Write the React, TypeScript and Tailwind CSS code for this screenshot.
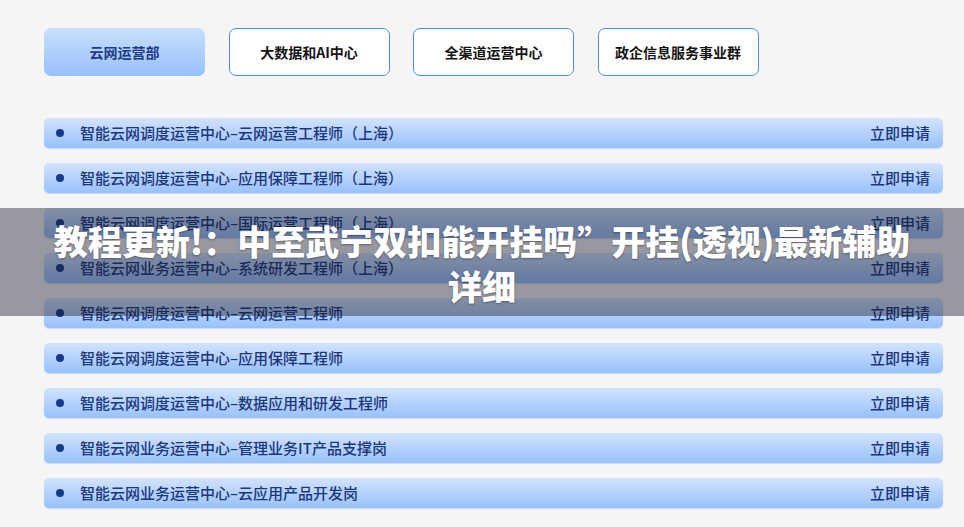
const tabs = ["云网运营部", "大数据和AI中心", "全渠道运营中心", "政企信息服务事业群"];

const jobs = [
  "智能云网调度运营中心–云网运营工程师（上海）",
  "智能云网调度运营中心–应用保障工程师（上海）",
  "智能云网调度运营中心–国际运营工程师（上海）",
  "智能云网业务运营中心–系统研发工程师（上海）",
  "智能云网调度运营中心–云网运营工程师",
  "智能云网调度运营中心–应用保障工程师",
  "智能云网调度运营中心–数据应用和研发工程师",
  "智能云网业务运营中心–管理业务IT产品支撑岗",
  "智能云网业务运营中心–云应用产品开发岗",
];

export default function App() {
  return (
    <div
      className="relative w-[964px] h-[527px] overflow-hidden bg-[#f5f5f6]"
      style={{ fontFamily: '"Noto Sans CJK SC", "Noto Sans", sans-serif' }}
    >
      <div className="flex gap-[23.5px] pl-[44px] pt-[28px]">
        {tabs.map((t, i) => (
          <div
            key={t}
            className={
              i === 0
                ? "w-[161px] h-[48px] rounded-[7px] flex items-center justify-center text-[14px] font-semibold text-[#1c3b85] bg-gradient-to-b from-[#cadffc] to-[#97c0fb]"
                : "w-[161px] h-[48px] rounded-[7px] flex items-center justify-center text-[14px] font-semibold text-[#141414] bg-white border-[1.5px] border-[#4f8fd9]"
            }
          >
            {t}
          </div>
        ))}
      </div>

      <div className="flex flex-col gap-[15px] pl-[44px] pt-[42px] w-[943px]">
        {jobs.map((j) => (
          <div
            key={j}
            className="h-[30px] rounded-[5px] flex items-center pl-[12px] pr-[13px] bg-gradient-to-b from-[#d2e3fd] to-[#98c1fb] shadow-[0_1px_1px_rgba(80,130,210,0.25)] text-[15px] font-medium text-[#1b377c]"
          >
            <span className="w-[8px] h-[8px] rounded-full bg-[#173a8c] mr-[16px]" />
            <span className="flex-1">{j}</span>
            <span>立即申请</span>
          </div>
        ))}
      </div>

      <div className="absolute left-0 right-0 top-[208px] h-[108px] bg-[rgba(25,25,40,0.42)] flex flex-col items-center pt-[10px] text-white font-black text-[34px] leading-[45px] [text-shadow:0_1px_2px_rgba(0,0,0,0.35)]">
        <span>教程更新!：中至武宁双扣能开挂吗”开挂(透视)最新辅助</span>
        <span>详细</span>
      </div>
    </div>
  );
}
